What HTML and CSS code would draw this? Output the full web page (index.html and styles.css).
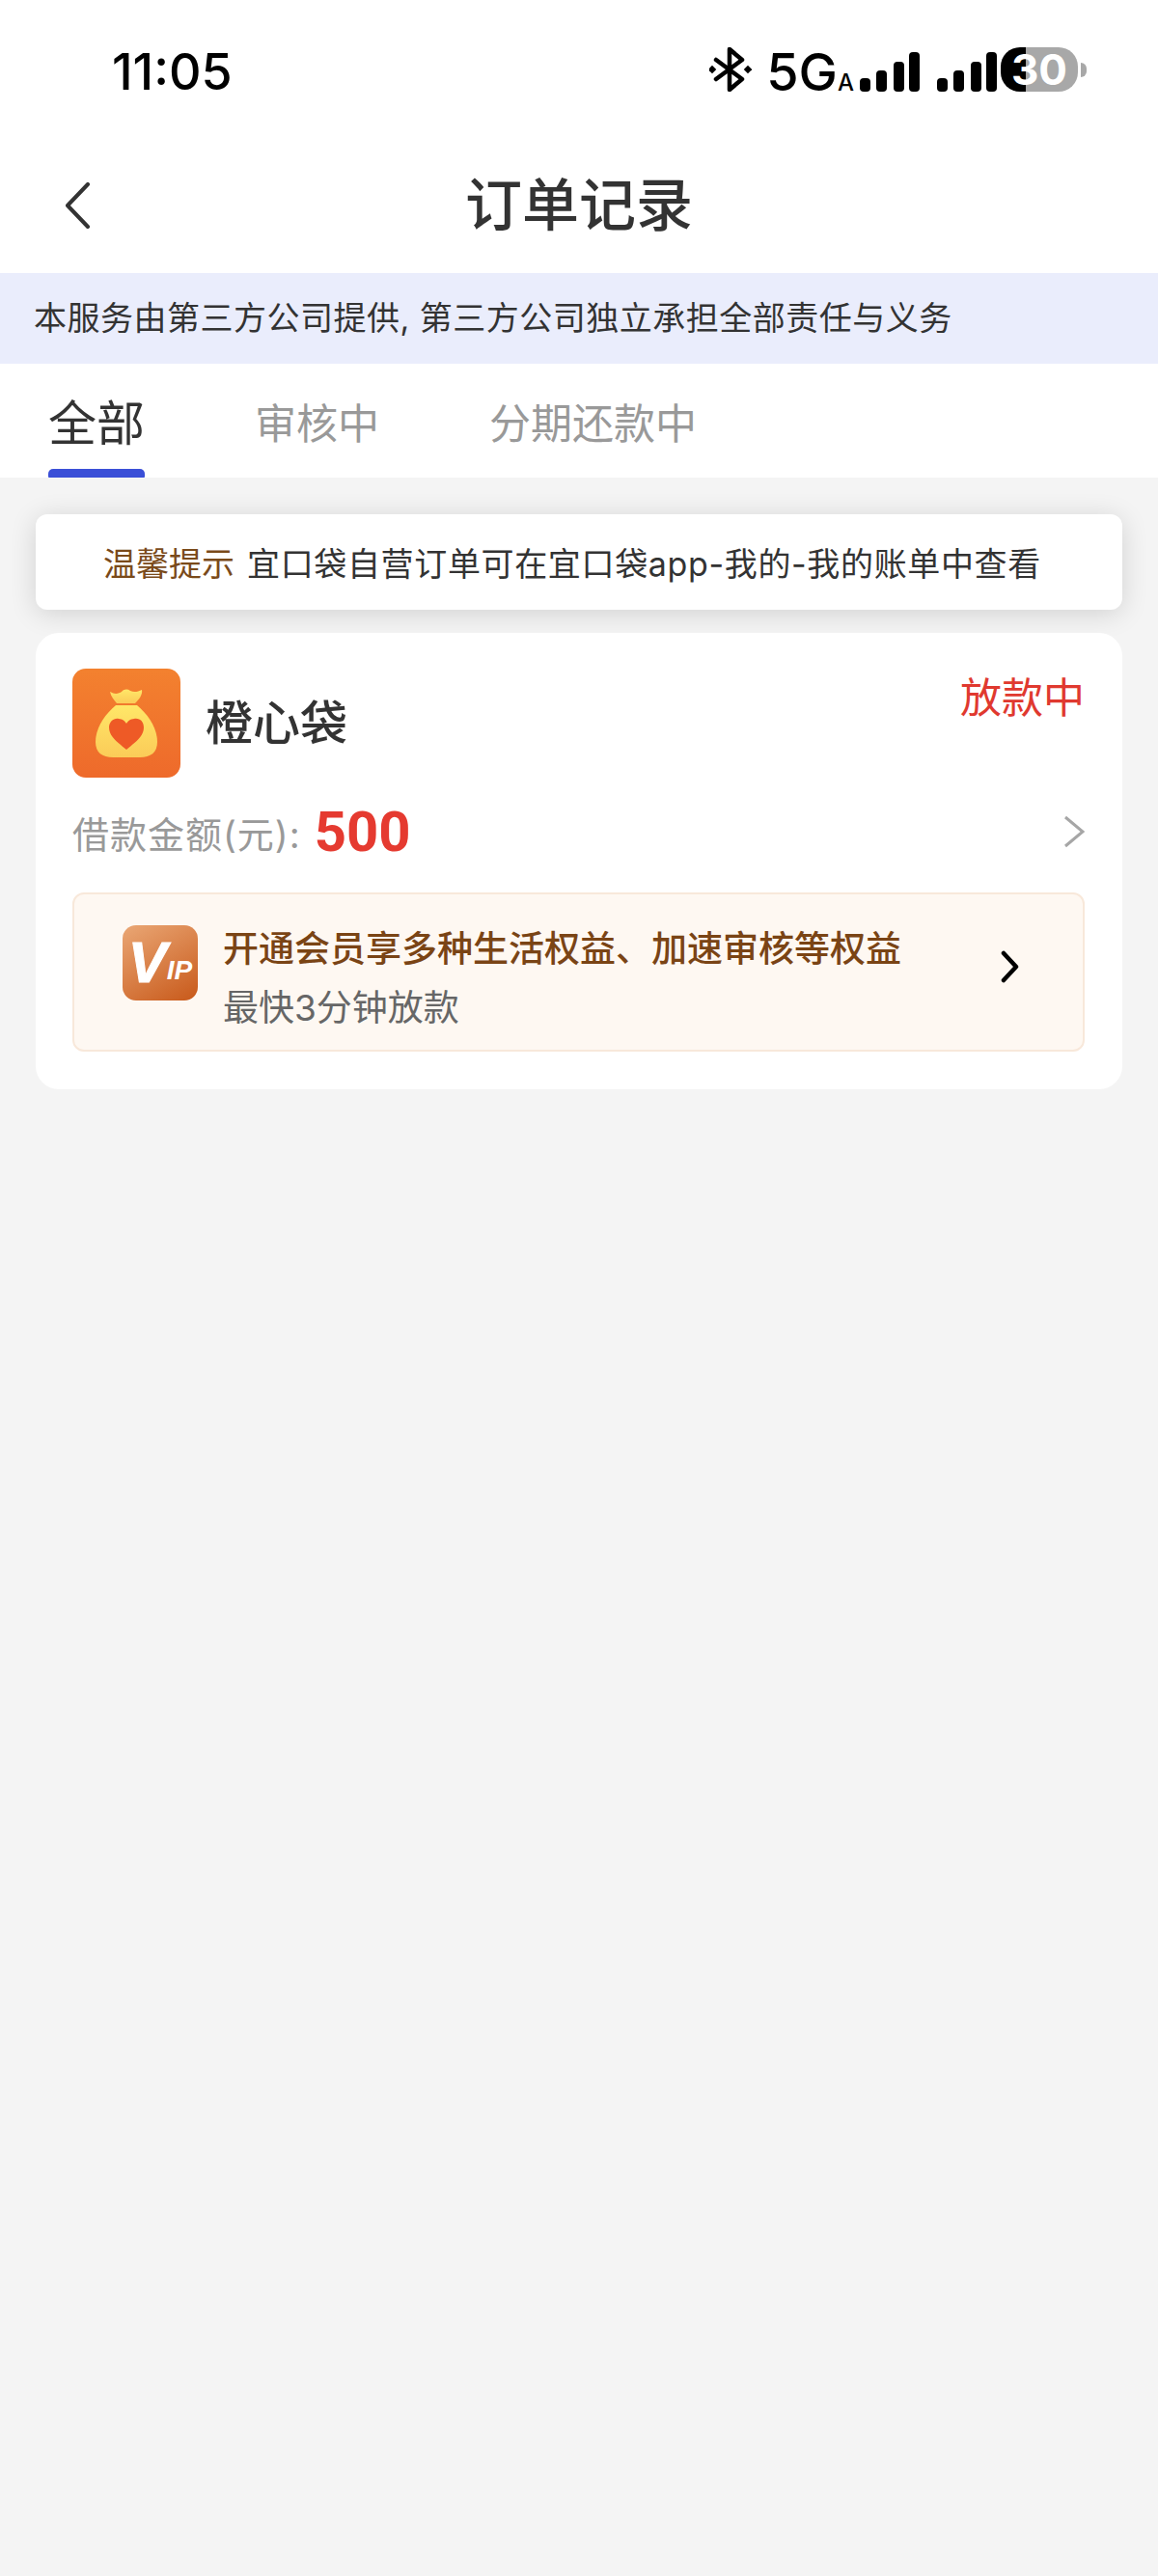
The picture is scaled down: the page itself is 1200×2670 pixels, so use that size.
FILE: index.html
```html
<!DOCTYPE html>
<html lang="zh-CN">
  <head>
    <meta charset="UTF-8" />
    <title>订单记录</title>
    <link rel="stylesheet" href="styles.css">
  </head>
  <body>
    <!-- 状态栏 -->
    <div class="status-bar">
      <span class="time">11:05</span>
      <div class="status-icons">
        <svg class="bluetooth" width="44" height="46" viewBox="0 0 44 46">
          <path d="M7 13 L34 33 L21 44 V2 L34 13 L7 33" fill="none" stroke="#000" stroke-width="4.5" stroke-linejoin="round" stroke-linecap="round" />
          <rect x="0" y="20" width="6" height="6" transform="rotate(45 3 23)" />
          <rect x="37" y="20" width="6" height="6" transform="rotate(45 40 23)" />
        </svg>
        <span class="net">5G</span>
        <span class="net-sub">A</span>
        <svg class="signal signal-first" width="62" height="41" viewBox="0 0 62 41">
          <rect x="0" y="27" width="11" height="14" rx="4" />
          <rect x="17" y="19" width="11" height="22" rx="4" />
          <rect x="35" y="10" width="11" height="31" rx="4" />
          <rect x="51" y="0" width="11" height="41" rx="4" />
        </svg>
        <svg class="signal" width="62" height="41" viewBox="0 0 62 41">
          <rect x="0" y="27" width="11" height="14" rx="4" />
          <rect x="17" y="19" width="11" height="22" rx="4" />
          <rect x="35" y="10" width="11" height="31" rx="4" />
          <rect x="51" y="0" width="11" height="41" rx="4" />
        </svg>
        <div class="battery">30</div>
        <div class="battery-tip"></div>
      </div>
    </div>

    <!-- 标题 -->
    <div class="nav">
      <svg class="back" width="28" height="48" viewBox="0 0 28 48">
        <path d="M25 2 L4 24 L25 46" fill="none" stroke="#333" stroke-width="4" stroke-linecap="round" stroke-linejoin="round" />
      </svg>
      <h1>订单记录</h1>
    </div>

    <div class="notice">本服务由第三方公司提供, 第三方公司独立承担全部责任与义务</div>

    <div class="tabs">
      <div class="tab active">全部</div>
      <div class="tab">审核中</div>
      <div class="tab">分期还款中</div>
    </div>

    <div class="content">
      <div class="tip">
        <span class="tip-label">温馨提示</span>
        <span class="tip-text">宜口袋自营订单可在宜口袋app-我的-我的账单中查看</span>
      </div>

      <div class="order">
        <div class="order-head">
          <svg class="app-icon" width="112" height="113" viewBox="0 0 112 113">
            <defs>
              <linearGradient id="bg" x1="0" y1="0" x2="0" y2="1">
                <stop offset="0" stop-color="#f3812f" />
                <stop offset="1" stop-color="#ee6a2b" />
              </linearGradient>
              <linearGradient id="bag" x1="0" y1="0" x2="0" y2="1">
                <stop offset="0" stop-color="#ffe768" />
                <stop offset="1" stop-color="#fbcb58" />
              </linearGradient>
            </defs>
            <rect width="112" height="113" rx="14" fill="url(#bg)" />
            <path d="M39 24 C44 27 48 26 51 24 C54 21 57 21 60 23 C64 25 68 24 72 22 C73 27 69 32 65 36 H46 C43 32 40 29 39 24 Z" fill="url(#bag)" />
            <path d="M45 38 H67 C79 48 88 62 88 76 C88 87 81 92 70 92 H42 C31 92 24 87 24 76 C24 62 33 48 45 38 Z" fill="url(#bag)" />
            <path d="M56 84 C48 77 38 71 38 61 C38 55 43 51 48 52 C52 52 55 55 56 57 C57 55 60 52 64 52 C70 51 74 55 74 61 C74 71 64 77 56 84 Z" fill="#ee5a26" />
          </svg>
          <div class="app-name">橙心袋</div>
          <div class="order-status">放款中</div>
        </div>

        <div class="amount-row">
          <span class="amount-label">借款金额(元):</span>
          <span class="amount">500</span>
          <svg class="arrow" width="22" height="34" viewBox="0 0 22 34">
            <path d="M2 2 L20 17 L2 32" fill="none" stroke="#a6a6a6" stroke-width="3" />
          </svg>
        </div>

        <div class="vip">
          <div class="vip-logo"><span class="vip-v">V</span><span class="vip-ip">IP</span></div>
          <div class="vip-text">
            <div class="vip-title">开通会员享多种生活权益、加速审核等权益</div>
            <div class="vip-sub">最快3分钟放款</div>
          </div>
          <svg class="vip-arrow" width="20" height="34" viewBox="0 0 20 34">
            <path d="M3 3 L16 17 L3 31" fill="none" stroke="#000" stroke-width="4.5" stroke-linecap="round" stroke-linejoin="round" />
          </svg>
        </div>
      </div>
    </div>
  </body>
</html>
```

FILE: styles.css
```css
* {
  box-sizing: border-box;
}

html,
body {
  margin: 0;
  height: 100%;
}

body {
  width: 1200px;
  height: 2670px;
  display: flex;
  flex-direction: column;
  font-family: Inter, "Noto Sans CJK SC", sans-serif;
  background: #fff;
  color: #333;
}

.status-bar {
  height: 147px;
  padding: 49px 74px 0 116px;
  display: flex;
  justify-content: space-between;
  align-items: flex-start;
  flex-shrink: 0;
}

.time {
  font-size: 52px;
  font-weight: 500;
  line-height: 48px;
  color: #000;
  margin-top: 2px;
}

.status-icons {
  display: flex;
  align-items: flex-start;
}

.net {
  font-size: 54px;
  font-weight: 500;
  line-height: 46px;
  color: #000;
  margin-left: 15px;
  margin-top: 3px;
}

.net-sub {
  font-size: 24px;
  line-height: 20px;
  font-weight: 500;
  color: #000;
  margin-top: 27px;
}

.signal {
  margin-top: 5px;
  margin-left: 18px;
}

.signal-first {
  margin-left: 6px;
}

.battery {
  width: 80px;
  height: 46px;
  margin-left: 4px;
  border-radius: 20px;
  background: linear-gradient(to right, #000 33%, #a8a8a8 33%);
  color: #fff;
  font-size: 44px;
  font-weight: 700;
  line-height: 46px;
  text-align: center;
}

.battery-tip {
  width: 6px;
  height: 15px;
  margin-top: 16px;
  margin-left: 3px;
  border-radius: 0 6px 6px 0;
  background: #a8a8a8;
}

.nav {
  height: 136px;
  flex-shrink: 0;
  display: flex;
  align-items: flex-start;
  justify-content: center;
  position: relative;
}

.nav h1 {
  margin: 33px 0 0;
  font-size: 59px;
  line-height: 66px;
  font-weight: 500;
  color: #333;
}

.back {
  position: absolute;
  left: 66px;
  top: 42px;
}

.notice {
  height: 94px;
  flex-shrink: 0;
  background: #eaedfc;
  padding-left: 35px;
  font-size: 34px;
  letter-spacing: 0.5px;
  line-height: 94px;
  color: #333;
}

.tabs {
  height: 118px;
  flex-shrink: 0;
  display: flex;
  align-items: flex-start;
  padding-left: 50px;
  gap: 114px;
}

.tab {
  position: relative;
  font-size: 43px;
  line-height: 62px;
  margin-top: 31px;
  color: #999;
}

.tab.active {
  width: 100px;
  font-size: 50px;
  line-height: 62px;
  margin-top: 31px;
  color: #333;
  text-align: center;
}

.tab.active::after {
  content: "";
  position: absolute;
  left: 0;
  right: 0;
  top: 78px;
  height: 9px;
  border-radius: 5px 5px 1px 1px;
  background: #3a4fd7;
}

.content {
  flex: 1;
  background: #f4f4f4;
  padding: 38px 37px 0;
}

.tip {
  height: 99px;
  background: #fff;
  border-radius: 12px;
  box-shadow: 0 4px 28px rgba(0, 0, 0, 0.14);
  padding-left: 70px;
  display: flex;
  align-items: center;
  gap: 13px;
  font-size: 34px;
  color: #333;
}

.tip-label {
  color: #7a4a1a;
}

.tip-text {
  letter-spacing: 0.65px;
}

.order {
  margin-top: 24px;
  height: 473px;
  background: #fff;
  border-radius: 24px;
  padding: 37px 39px 0 38px;
}

.order-head {
  display: flex;
  align-items: flex-start;
  height: 113px;
}

.app-name {
  margin-left: 26px;
  font-size: 49px;
  font-weight: 500;
  line-height: 66px;
  margin-top: 24px;
  color: #333;
}

.order-status {
  margin-left: auto;
  font-size: 43px;
  line-height: 60px;
  color: #e0392f;
}

.amount-row {
  display: flex;
  align-items: center;
  height: 66px;
  margin-top: 23px;
}

.amount-label {
  font-size: 38px;
  letter-spacing: 1px;
  color: #999;
}

.amount {
  margin-left: 14px;
  font-family: Roboto, sans-serif;
  font-size: 58px;
  font-weight: 700;
  color: #e53a30;
}

.arrow {
  margin-left: auto;
}

.vip {
  margin-top: 30px;
  height: 165px;
  background: #fef8f2;
  border: 2px solid #f8e8da;
  border-radius: 12px;
  padding-left: 50px;
  padding-right: 66px;
  display: flex;
  align-items: center;
}

.vip-logo {
  width: 78px;
  height: 78px;
  flex-shrink: 0;
  margin-top: -20px;
  border-radius: 14px;
  background: linear-gradient(150deg, #eaa775, #c8591a);
  color: #fff;
  font-family: "Liberation Sans", sans-serif;
  font-weight: 700;
  font-style: italic;
  display: flex;
  align-items: center;
  justify-content: center;
}

.vip-v {
  font-size: 60px;
  line-height: 60px;
  -webkit-text-stroke: 1px #fff;
}

.vip-ip {
  font-size: 28px;
  line-height: 30px;
  margin-top: 16px;
}

.vip-text {
  margin-left: 26px;
  margin-top: 14px;
}

.vip-title {
  font-size: 37px;
  line-height: 50px;
  font-weight: 500;
  color: #7a4415;
}

.vip-sub {
  margin-top: 11px;
  font-size: 37px;
  line-height: 50px;
  color: #666;
}

.vip-arrow {
  margin-left: auto;
  margin-top: -12px;
  margin-right: -1px;
}
```
